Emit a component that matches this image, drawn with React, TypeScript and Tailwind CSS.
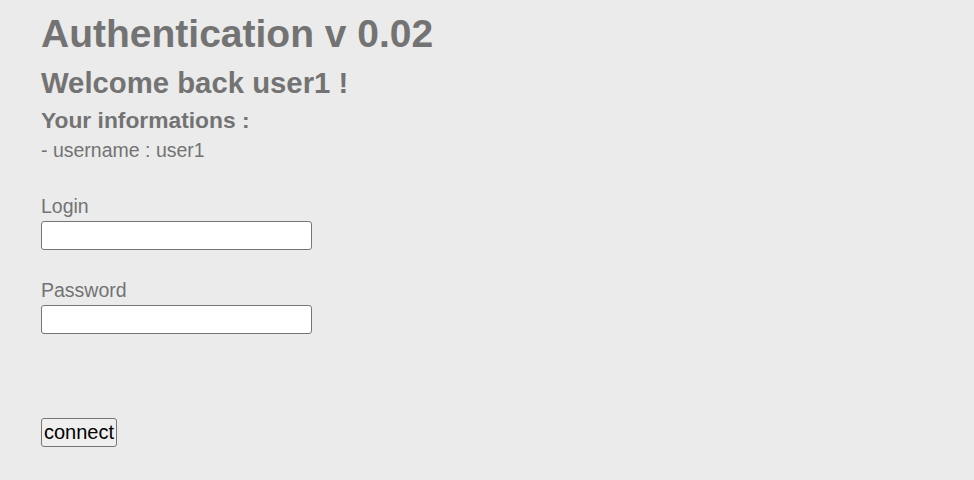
import React from 'react';

const App = () => {
  return (
    <div className="min-h-[480px] w-full bg-[#ebebeb] text-[#737373] font-['Liberation_Sans',Arial,sans-serif]">
      <div className="flex flex-col items-start pl-[41px] pt-[14px]">
        <h1 className="text-[39px] leading-none font-bold">Authentication v 0.02</h1>
        <h2 className="mt-[15px] text-[29.3px] leading-none font-bold">Welcome back user1 !</h2>
        <h3 className="mt-[12px] text-[22.8px] leading-none font-bold">Your informations :</h3>
        <p className="mt-[9px] text-[19.5px] leading-none">- username : user1</p>

        <form className="flex flex-col items-start" onSubmit={(e) => e.preventDefault()}>
          <label className="mt-[36px] text-[19.5px] leading-none">Login</label>
          <input
            type="text"
            className="mt-[5px] h-[29px] w-[271px] rounded-[3px] border border-[#767676] bg-white"
          />
          <label className="mt-[31px] text-[19.5px] leading-none">Password</label>
          <input
            type="password"
            className="mt-[4px] h-[29px] w-[271px] rounded-[3px] border border-[#767676] bg-white"
          />
          <button
            type="submit"
            className="mt-[84px] h-[29px] rounded-[3px] border border-[#767676] bg-[#efefef] px-[2px] pb-[1px] text-[20px] leading-none text-black"
          >
            connect
          </button>
        </form>
      </div>
    </div>
  );
};

export default App;
